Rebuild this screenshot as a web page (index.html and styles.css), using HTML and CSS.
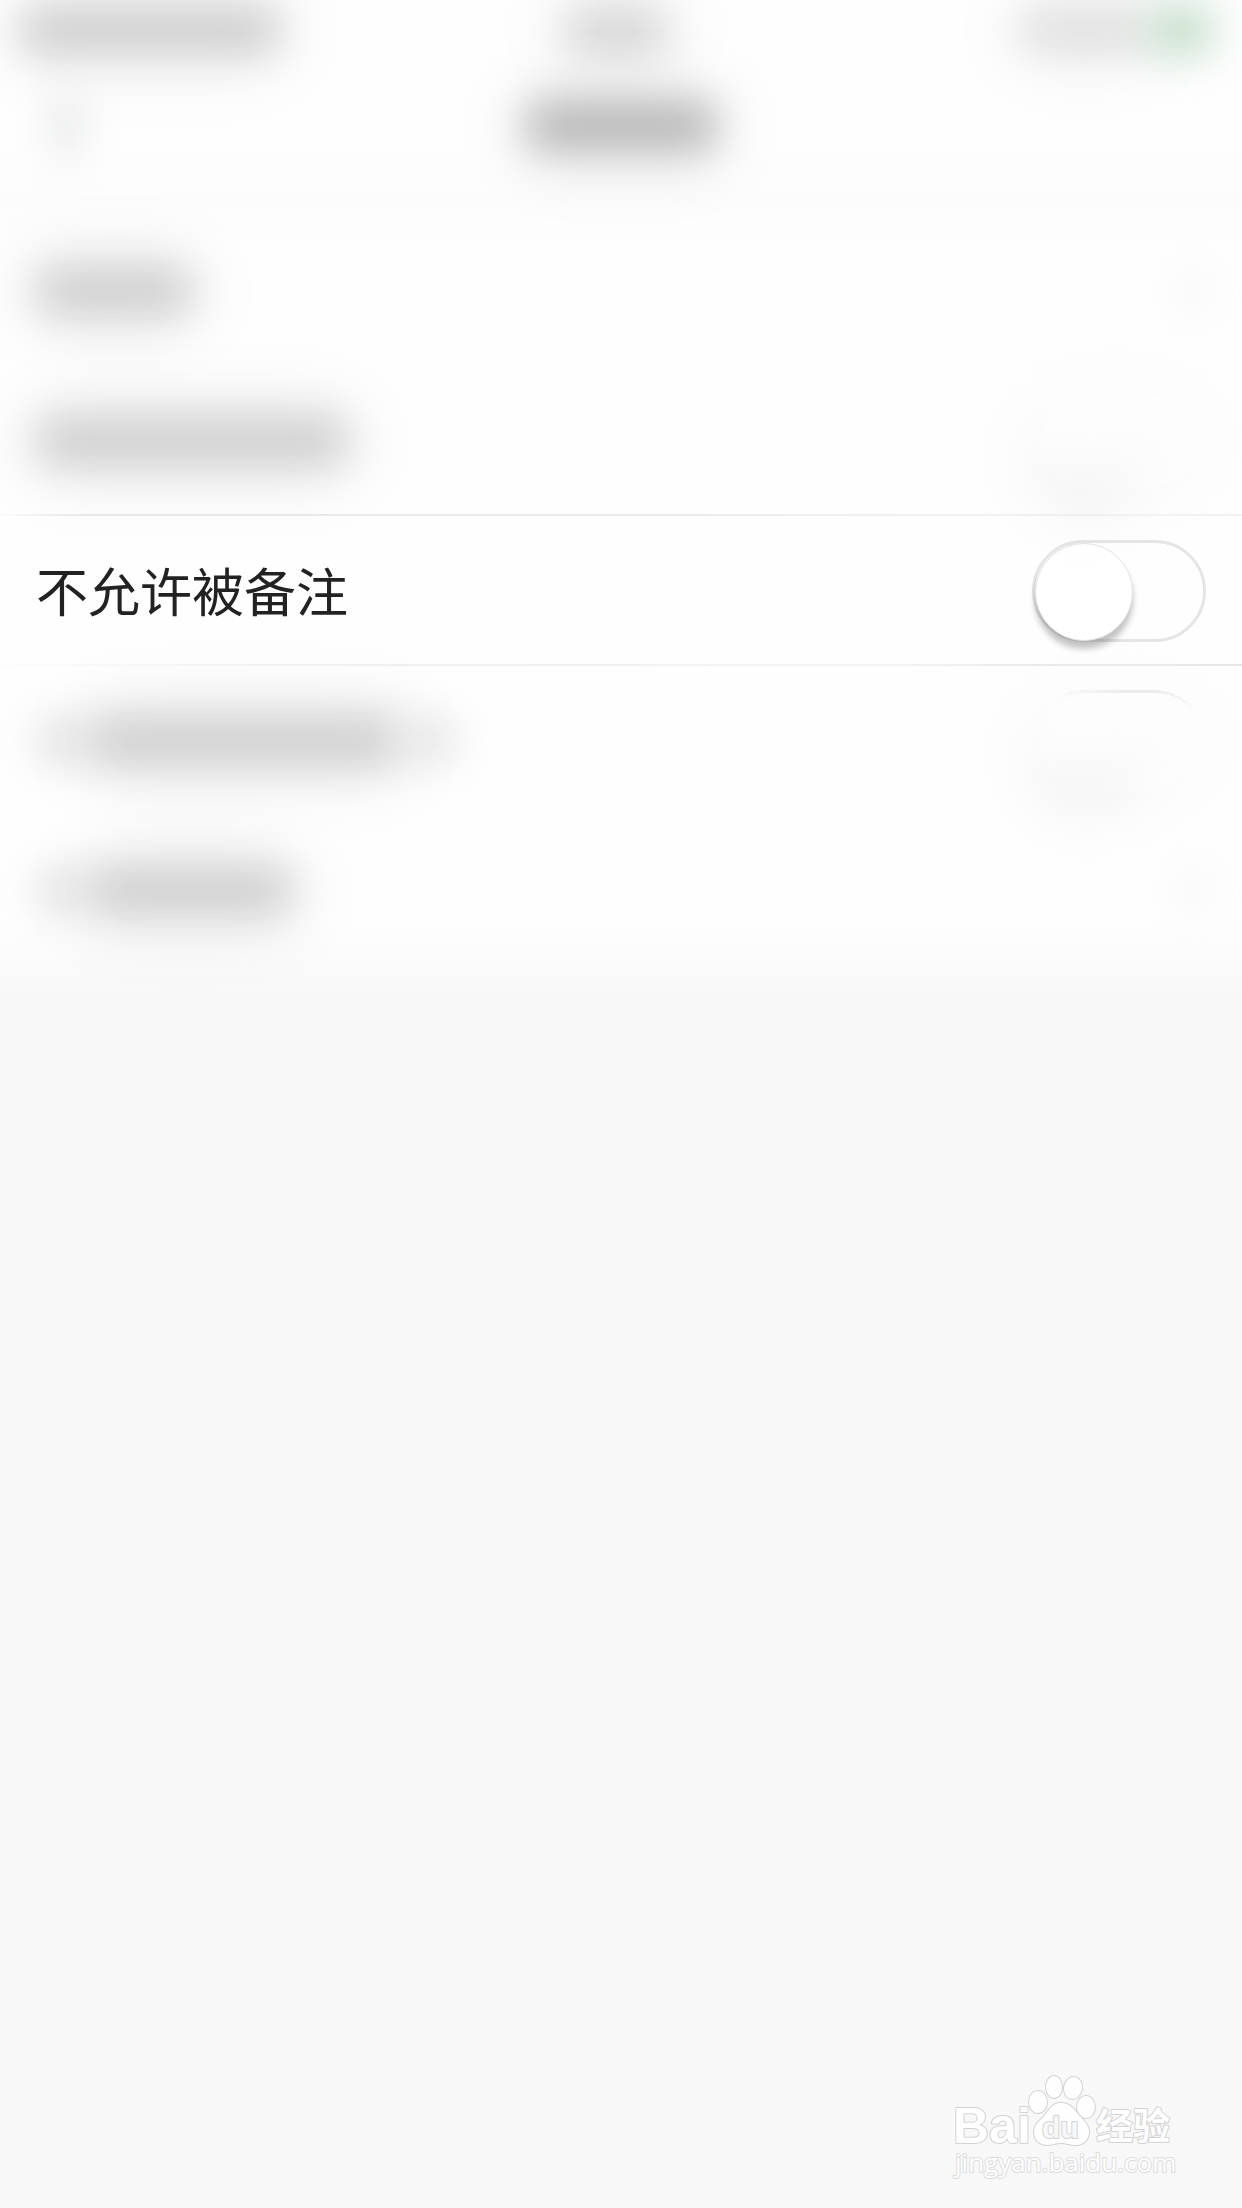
FILE: index.html
```html
<!DOCTYPE html>
<html lang="zh-CN">
<head>
<meta charset="utf-8">
<meta name="viewport" content="width=device-width, initial-scale=1">
<title>不允许被备注</title>
<link rel="stylesheet" href="styles.css">
</head>
<body>
<div class="page">
  <header class="header">
    <div class="status" aria-hidden="true">
      <span class="status-left"><i class="smudge carrier"></i></span>
      <span class="smudge clock"></span>
      <span class="status-right"><i class="smudge signal"></i><i class="smudge battery"></i></span>
    </div>
    <div class="nav" aria-hidden="true">
      <i class="smudge back"></i>
      <i class="smudge title"></i>
      <i></i>
    </div>
  </header>
  <main class="list">
    <div class="row" aria-hidden="true">
      <i class="smudge label label-3"></i><i class="smudge chevron"></i>
    </div>
    <div class="row line-top" aria-hidden="true">
      <i class="smudge label label-6"></i><i class="switch switch-blurred"></i>
    </div>
    <div class="row line-bottom">
      <label class="text" for="no-remark">不允许被备注</label>
      <input class="switch" type="checkbox" id="no-remark">
    </div>
    <div class="row" aria-hidden="true">
      <span class="label-group"><i class="smudge label-lead"></i><i class="smudge label label-6"></i><i class="smudge label-tail"></i></span>
      <span class="switch-stack"><i class="switch switch-blurred"></i><i class="switch switch-fading"></i></span>
    </div>
    <div class="row" aria-hidden="true">
      <span class="label-group"><i class="smudge label-lead"></i><i class="smudge label label-4"></i></span><i class="smudge chevron"></i>
    </div>
  </main>
  <svg class="watermark" viewBox="0 0 270 150" role="img" aria-label="Baidu 经验">
    <g class="mark">
      <text class="brand" x="23" y="93">Bai</text>
      <ellipse cx="108" cy="52" rx="9" ry="11"/>
      <ellipse cx="124" cy="37" rx="8" ry="11"/>
      <ellipse cx="143" cy="38" rx="9" ry="11" transform="rotate(10 143 38)"/>
      <ellipse cx="156" cy="57" rx="9" ry="11"/>
      <path d="M131 53c-9 0-12 7-16 12c-5 6-11 9-11 17c0 8 6 13 13 13c5 0 9-2 14-2s9 2 15 2c7 0 13-5 13-13c0-8-6-12-11-18c-4-5-8-11-17-11z"/>
      <text class="brand-du" x="112" y="88">du</text>
      <text class="brand-cn" x="166" y="90">经验</text>
      <text class="site" x="25" y="122">jingyan.baidu.com</text>
    </g>
  </svg>
</div>
</body>
</html>
```
FILE: styles.css
```css
* {
  box-sizing: border-box;
}

body {
  margin: 0;
  background: #f8f8f8;
  font-family: "Noto Sans CJK SC", "Liberation Sans", sans-serif;
}

.page {
  position: relative;
  min-height: 100vh;
  overflow: hidden;
  background: linear-gradient(#fefefe 0 140px, #fcfcfc 200px, #fefefe 250px 920px, #f8f8f8 1000px);
}

.header {
  padding-bottom: 24px;
}

.smudge {
  display: block;
  flex: none;
  border-radius: 20px;
  background: #cfcfcf;
  box-shadow: 0 0 64px 8px rgba(0, 0, 0, 0.08);
  filter: blur(21px);
}

.status {
  display: grid;
  grid-template-columns: 1fr auto 1fr;
  align-items: center;
  height: 60px;
  padding: 0 30px 0 20px;
}

.status-right {
  display: flex;
  align-items: center;
  justify-content: flex-end;
}

.carrier {
  width: 260px;
  height: 46px;
  background: #cdcdcd;
}

.clock {
  width: 104px;
  height: 42px;
  background: #d4d4d4;
}

.signal {
  width: 130px;
  height: 36px;
  background: #dcdcdc;
}

.battery {
  width: 62px;
  height: 44px;
  background: #bedac5;
  box-shadow: 0 0 48px rgba(60, 160, 80, 0.1);
}

.nav {
  display: grid;
  grid-template-columns: 1fr auto 1fr;
  align-items: center;
  height: 132px;
  padding: 0 36px;
}

.back {
  width: 26px;
  height: 60px;
  margin-left: 18px;
  background: #e0e3e2;
  box-shadow: none;
}

.title {
  width: 192px;
  height: 52px;
  background: #b8b8b8;
}

.row {
  display: flex;
  align-items: center;
  justify-content: space-between;
  height: 150px;
  padding: 0 36px;
}

.line-top {
  background: linear-gradient(90deg, #fafafa, #ebebeb 80px 700px, #f2f2f2 1000px) bottom / 100% 2px no-repeat;
}

.line-bottom {
  background: linear-gradient(90deg, #fcfcfc, #f1f1f1 400px, #f3f3f3 900px, #e7e7e7 1060px) bottom / 100% 2px no-repeat;
}

.text {
  padding-bottom: 2px;
  color: #222;
  font-size: 52px;
  line-height: 76px;
}

.label {
  height: 50px;
}

.label-3 {
  width: 156px;
}

.label-4 {
  width: 204px;
}

.label-6 {
  width: 312px;
}

.label-group {
  display: flex;
  align-items: center;
}

.label-lead {
  width: 52px;
  height: 42px;
  background: #e2e2e2;
  box-shadow: none;
}

.label-tail {
  width: 56px;
  height: 40px;
  background: #e2e2e2;
  box-shadow: none;
}

.chevron {
  width: 24px;
  height: 40px;
  background: #f3f3f3;
  box-shadow: none;
}

.switch {
  appearance: none;
  display: block;
  flex: none;
  width: 174px;
  height: 102px;
  margin: 0;
  border: 3px solid #e5e5e5;
  border-radius: 51px;
  background: #fefefe;
}

.switch::before {
  content: "";
  display: block;
  width: 96px;
  height: 96px;
  border: 1px solid #e2e2e2;
  border-radius: 50%;
  background: #fff;
  box-shadow: 0 8px 6px rgba(0, 0, 0, 0.24);
}

.switch:checked::before {
  margin-left: auto;
}

.switch-blurred {
  filter: blur(30px);
}

.switch-stack {
  display: grid;
}

.switch-stack .switch {
  grid-area: 1 / 1;
}

.switch-fading {
  background: none;
  -webkit-mask-image: radial-gradient(ellipse 84px 28px at 104px 0, rgba(0, 0, 0, 0.7) 20%, transparent);
  mask-image: radial-gradient(ellipse 84px 28px at 104px 0, rgba(0, 0, 0, 0.7) 20%, transparent);
}

.switch-fading::before {
  border-color: #f4f4f4;
  background: none;
  box-shadow: none;
}

.watermark {
  position: absolute;
  right: 42px;
  bottom: 8px;
  width: 270px;
  height: 150px;
}

.mark {
  fill: #fefefe;
  stroke: #d2d2d2;
  stroke-width: 2px;
  stroke-linejoin: round;
  paint-order: stroke;
}

.brand {
  font: bold 50px "Liberation Sans", sans-serif;
}

.brand-du {
  fill: #f7f7f7;
  font: bold 30px "Liberation Sans", sans-serif;
}

.brand-cn {
  font: bold 37px "Noto Sans CJK SC", sans-serif;
}

.site {
  stroke: #dcdcdc;
  font: 26px "Open Sans", sans-serif;
}
```
